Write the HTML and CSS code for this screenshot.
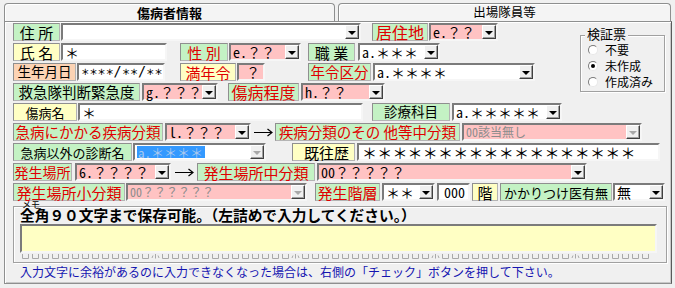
FILE: index.html
```html
<!DOCTYPE html>
<html lang="ja">
<head>
<meta charset="utf-8">
<title>傷病者情報</title>
<link rel="stylesheet" href="styles.css">
</head>
<body>
<div class="win">
  <div class="tabs">
    <div class="tab tab-on">傷病者情報</div>
    <div class="tab tab-off">出場隊員等</div>
  </div>
  <div class="panel">
    <div class="top">
      <div class="rows">
        <div class="row">
          <div class="lbl g w-addr-l">住 所</div>
          <div class="fld w-addr"><span class="val"></span><span class="btn"></span></div>
          <div class="lbl g r w-home-l">居住地</div>
          <div class="fld pink w-home"><span class="val">e.？？</span><span class="btn"></span></div>
        </div>
        <div class="row">
          <div class="lbl y w-name-l">氏 名</div>
          <div class="fld w-name"><span class="val">＊</span></div>
          <div class="lbl g r w-sex-l">性 別</div>
          <div class="fld pink w-sex"><span class="val">e.？？</span><span class="btn"></span></div>
          <div class="lbl g w-job-l">職 業</div>
          <div class="fld w-job"><span class="val">a.＊＊＊</span><span class="btn"></span></div>
        </div>
        <div class="row">
          <div class="lbl p w-dob-l">生年月日</div>
          <div class="fld w-dob"><span class="val dob">∗∗∗∗/∗∗/∗∗</span></div>
          <div class="lbl y r w-age-l">満年令</div>
          <div class="fld pink w-age"><span class="val right">？</span></div>
          <div class="lbl g r w-agec-l">年令区分</div>
          <div class="fld w-agec"><span class="val">a.＊＊＊＊</span><span class="btn"></span></div>
        </div>
        <div class="row">
          <div class="lbl g w-urg-l">救急隊判断緊急度</div>
          <div class="fld pink w-urg"><span class="val">g.？？？</span><span class="btn"></span></div>
          <div class="lbl g r w-sev-l">傷病程度</div>
          <div class="fld pink w-sev"><span class="val">h.？？</span><span class="btn"></span></div>
        </div>
      </div>
      <div class="kensho">
        <span class="legend">検証票</span>
        <div class="radio"><span class="rb"></span>不要</div>
        <div class="radio"><span class="rb on"></span>未作成</div>
        <div class="radio"><span class="rb"></span>作成済み</div>
      </div>
    </div>

    <div class="row">
      <div class="lbl y w-dis-l">傷病名</div>
      <div class="fld w-dis"><span class="val">＊</span></div>
      <div class="lbl g w-dept-l">診療科目</div>
      <div class="fld w-dept"><span class="val">a.＊＊＊＊＊</span><span class="btn"></span></div>
    </div>
    <div class="row">
      <div class="lbl g r w-cls-l">急病にかかる疾病分類</div>
      <div class="fld pink w-cls"><span class="val">l.？？？</span><span class="btn"></span></div>
      <div class="arrow w-arr1"><svg width="19" height="9" viewBox="0 0 19 9"><path d="M0 4.5H18M13.5 1L18 4.5L13.5 8" stroke="#000" stroke-width="1.2" fill="none"/></svg></div>
      <div class="lbl g r w-mid-l">疾病分類のその 他等中分類</div>
      <div class="fld pink dis w-mid"><span class="val">00該当無し</span><span class="btn"></span></div>
    </div>
    <div class="row">
      <div class="lbl g w-diag-l">急病以外の診断名</div>
      <div class="fld dis-w w-diag"><span class="val"><span class="hl">a.＊＊＊＊</span></span><span class="btn"></span></div>
      <div class="lbl y w-hist-l">既往歴</div>
      <div class="fld w-hist"><span class="val hist">＊＊＊＊＊＊＊＊＊＊＊＊＊＊＊＊＊＊</span></div>
    </div>
    <div class="row">
      <div class="lbl g r w-pl-l">発生場所</div>
      <div class="fld pink w-pl"><span class="val">6.？？？？</span><span class="btn"></span></div>
      <div class="arrow w-arr2"><svg width="19" height="9" viewBox="0 0 19 9"><path d="M0 4.5H18M13.5 1L18 4.5L13.5 8" stroke="#000" stroke-width="1.2" fill="none"/></svg></div>
      <div class="lbl g r w-plm-l">発生場所中分類</div>
      <div class="fld pink w-plm"><span class="val">00？？？？？</span><span class="btn"></span></div>
    </div>
    <div class="row">
      <div class="lbl g r w-pls-l">発生場所小分類</div>
      <div class="fld pink dis w-pls"><span class="val">00？？？？？？</span><span class="btn"></span></div>
      <div class="lbl g r w-fl-l">発生階層</div>
      <div class="fld w-fl"><span class="val">＊＊</span><span class="btn"></span></div>
      <div class="fld w-fln"><span class="val right">000</span></div>
      <div class="lbl y w-kai">階</div>
      <div class="lbl g w-doc-l">かかりつけ医有無</div>
      <div class="fld w-doc"><span class="val">無</span><span class="btn"></span></div>
    </div>

    <div class="memo">
      <span class="memo-legend">メモ</span>
      <div class="memo-title">全角９０文字まで保存可能。（左詰めで入力してください。）</div>
      <div class="memo-area"></div>
      <svg class="ruler" width="637" height="5" viewBox="0 0 637 5">
        <defs>
          <pattern id="rp" x="2" y="0" width="140" height="5" patternUnits="userSpaceOnUse">
            <path d="M0.5 0V4.5H6.5V0M10.5 0V4.5H16.5V0M20.5 0V4.5H26.5V0M30.5 0V4.5H36.5V0M40.5 0V4.5H46.5V0M50.5 0V4.5H56.5V0M60.5 0V4.5H66.5V0M70.5 0V4.5H76.5V0M80.5 0V4.5H86.5V0M90.5 0V4.5H96.5V0M100.5 0V4.5H106.5V0M110.5 0V4.5H116.5V0M120.5 0V4.5H126.5V0M133.5 0V4.5M131 1.5L130 4M136 1.5L137 4" stroke="#a8a8a8" stroke-width="1" fill="none"/>
          </pattern>
        </defs>
        <rect x="2" y="0" width="630" height="5" fill="url(#rp)"/>
      </svg>
    </div>
    <div class="note">入力文字に余裕があるのに入力できなくなった場合は、右側の「チェック」ボタンを押して下さい。</div>
  </div>
</div>
</body>
</html>
```

FILE: styles.css
```css
* { box-sizing: border-box; }
html, body { margin: 0; padding: 0; }
body {
  background: #f0f0f0;
  font-family: "Noto Sans CJK JP", "Noto Sans", sans-serif;
  color: #000;
  width: 675px;
  height: 288px;
  overflow: hidden;
}
.win { padding: 3px 0 0 4px; width: 675px; }

/* tabs */
.tabs { display: flex; height: 18px; }
.tab {
  height: 18px;
  border: 1px solid #8e8f8f;
  border-bottom: none;
  border-radius: 4px 4px 0 0;
  background: #f4f4f4;
  box-shadow: inset 1px 1px 0 #fff;
  display: flex;
  align-items: center;
  justify-content: center;
  line-height: 1;
}
.tab-on { width: 331px; font-size: 13px; font-weight: 700; }
.tab-off { width: 333px; margin-left: 3px; font-size: 12.5px; }

.panel {
  width: 668px;
  height: 263px;
  border: 1px solid #8e8f8f;
  border-right-color: #5a5a5a;
  box-shadow: inset 1px 1px 0 #fff, inset -1px -1px 0 #c8c8c8;
  padding: 1px 6px 0 8px;
}

.top { display: flex; }
.rows { flex: none; }

.row { display: flex; height: 18px; margin-bottom: 2px; }

/* labels */
.lbl {
  flex: none;
  height: 18px;
  display: flex;
  align-items: center;
  justify-content: center;
  border: 1px solid #8f8f8f;
  border-right-color: #b4b4b4;
  border-bottom-color: #b4b4b4;
  font-size: 15px;
  line-height: 1;
  white-space: nowrap;
}
.g { background: #c4f2c4; }
.y { background: #ffffc4; }
.p { background: #fcd3b4; }
.r { color: #e00000; }

/* fields */
.fld {
  flex: none;
  display: flex;
  height: 18px;
  border: 2px solid;
  border-color: #7b7b7b #f6f6f6 #f6f6f6 #7b7b7b;
  background: #fff;
}
.pink { background: #ffc3c3; }
.val {
  flex: 1;
  min-width: 0;
  display: flex;
  align-items: center;
  padding-left: 2px;
  font-family: "Noto Sans Mono CJK JP", "Noto Sans CJK JP", monospace;
  font-size: 14px;
  line-height: 1;
  white-space: nowrap;
}
.val.right { justify-content: flex-end; padding-right: 3px; }
.val.dob { font-family: "DejaVu Sans Mono", monospace; font-size: 13.5px; }
.val.hist { font-size: 15px; letter-spacing: 0.2px; padding-left: 3px; }
.dis .val { color: #8c8c8c; font-size: 12px; }
.hl {
  display: inline-flex;
  align-items: center;
  height: 12px;
  background: #3399ff;
  color: #a9c8ee;
  font-size: 13px;
  padding: 0 2px 0 1px;
}
.btn {
  flex: none;
  width: 14px;
  background: #f0f0f0;
  border: 1px solid;
  border-color: #fff #404040 #404040 #fff;
  box-shadow: inset -1px -1px 0 #a0a0a0;
  display: flex;
  align-items: center;
  justify-content: center;
}
.btn::after {
  content: "";
  border-left: 4px solid transparent;
  border-right: 4px solid transparent;
  border-top: 4px solid #000;
  margin-top: 1px;
}
.dis .btn::after, .dis-w .btn::after { border-top-color: #a8a8a8; }

.arrow { flex: none; display: flex; align-items: center; justify-content: center; }

/* widths and spacing, row 1 */
.w-addr-l { width: 47px; }
.w-addr { width: 300px; margin-left: 1px; }
.w-home-l { width: 56px; margin-left: 11px; font-size: 16px; }
.w-home { width: 69px; margin-left: 1px; }
/* row 2 */
.w-name-l { width: 47px; }
.w-name { width: 106px; margin-left: 1px; }
.w-sex-l { width: 48px; margin-left: 13px; }
.w-sex { width: 72px; margin-left: 1px; }
.w-job-l { width: 47px; margin-left: 7px; }
.w-job { width: 82px; margin-left: 3px; }
/* row 3 */
.w-dob-l { width: 63px; font-size: 13.5px; }
.w-dob { width: 88px; margin-left: 1px; }
.w-age-l { width: 56px; margin-left: 15px; }
.w-age { width: 28px; margin-left: 1px; }
.w-agec-l { width: 63px; margin-left: 43px; font-size: 14.5px; }
.w-agec { width: 162px; margin-left: 2px; }
/* row 4 */
.w-urg-l { width: 127px; font-size: 14.5px; }
.w-urg { width: 76px; margin-left: 2px; }
.w-sev-l { width: 71px; margin-left: 10px; font-size: 16px; }
.w-sev { width: 84px; margin-left: 2px; }
/* row 5 */
.w-dis-l { width: 64px; font-size: 13px; }
.w-dis { width: 285px; margin-left: 1px; }
.w-dept-l { width: 78px; margin-left: 9px; font-size: 13.5px; }
.w-dept { width: 110px; margin-left: 2px; }
/* row 6 */
.w-cls-l { width: 150px; font-size: 14.5px; }
.w-cls { width: 86px; margin-left: 2px; }
.w-arr1 { width: 22px; margin-left: 1px; }
.w-mid-l { width: 185px; margin-left: 1px; font-size: 14.5px; }
.w-mid { width: 180px; margin-left: 2px; }
/* row 7 */
.w-diag-l { width: 119px; font-size: 13px; }
.w-diag { width: 133px; margin-left: 1px; }
.w-hist-l { width: 63px; margin-left: 26px; padding-left: 6px; }
.w-hist { width: 303px; margin-left: 2px; }
/* row 8 */
.w-pl-l { width: 59px; font-size: 14px; }
.w-pl { width: 96px; margin-left: 3px; }
.w-arr2 { width: 24px; margin-left: 1px; }
.w-plm-l { width: 118px; margin-left: 1px; }
.w-plm { width: 270px; margin-left: 2px; }
/* row 9 */
.w-pls-l { width: 112px; }
.w-pls { width: 181px; margin-left: 1px; }
.w-fl-l { width: 65px; margin-left: 8px; }
.w-fl { width: 53px; margin-left: 2px; }
.w-fln { width: 33px; margin-left: 2px; }
.w-kai { width: 26px; margin-left: 2px; }
.w-doc-l { width: 112px; margin-left: 2px; font-size: 13px; }
.w-doc { width: 52px; margin-left: 1px; }

/* 検証票 group */
.kensho {
  position: relative;
  flex: none;
  margin-left: auto;
  margin-top: 12px;
  width: 85px;
  height: 57px;
  border: 1px solid #a0a0a0;
  box-shadow: inset 1px 1px 0 #fff, 1px 1px 0 #fff;
  padding: 6px 0 0 7px;
}
.legend {
  position: absolute;
  top: -9px;
  left: 4px;
  padding: 0 2px;
  background: #f0f0f0;
  font-size: 13px;
  line-height: 13px;
}
.radio {
  display: flex;
  align-items: center;
  height: 16px;
  font-size: 12px;
  line-height: 1;
  white-space: nowrap;
}
.rb {
  flex: none;
  width: 10px;
  height: 10px;
  margin-right: 7px;
  border-radius: 50%;
  border: 1px solid;
  border-color: #7a7a7a #e8e8e8 #e8e8e8 #7a7a7a;
  background: #fff;
  display: flex;
  align-items: center;
  justify-content: center;
}
.rb.on::after {
  content: "";
  width: 4px;
  height: 4px;
  border-radius: 50%;
  background: #000;
}

/* memo */
.memo {
  position: relative;
  margin-top: 5px;
  width: 654px;
  border: 1px solid #a0a0a0;
  box-shadow: inset 1px 1px 0 #fff, 1px 1px 0 #fff;
  padding: 0 0 3px 6px;
}
.memo-legend {
  position: absolute;
  left: 8px;
  top: -7px;
  font-size: 9px;
  line-height: 9px;
}
.memo-title {
  font-size: 14.7px;
  font-weight: 700;
  line-height: 16px;
  white-space: nowrap;
}
.memo-area {
  margin-top: 1px;
  width: 637px;
  height: 29px;
  background: #ffffc4;
  border: 2px solid;
  border-color: #7b7b7b #f6f6f6 #f6f6f6 #7b7b7b;
}
.ruler { display: block; margin-top: 1px; }

.note {
  margin-top: 1px;
  padding-left: 7px;
  font-size: 12px;
  line-height: 15px;
  color: #1414b0;
  white-space: nowrap;
}
```
